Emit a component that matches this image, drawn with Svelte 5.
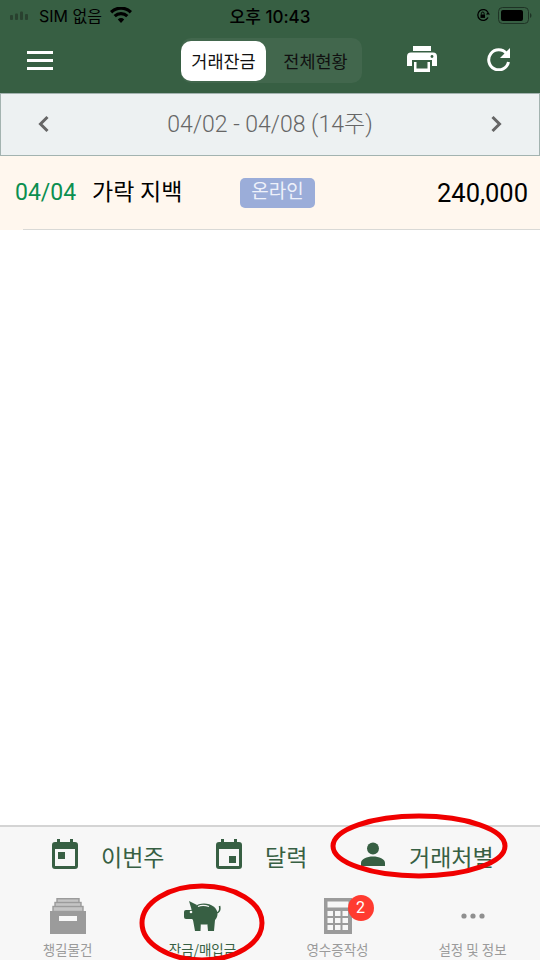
<script>
  const tabs = [
    { label: '챙길물건', icon: 'box' },
    { label: '잔금/매입금', icon: 'pig', active: true },
    { label: '영수증작성', icon: 'calc', badge: 2 },
    { label: '설정 및 정보', icon: 'dots' }
  ];
</script>

<div class="page">
  <header class="head">
    <div class="status">
      <div class="status-left">
        <svg class="signal" width="18" height="10" viewBox="0 0 18 10"><rect x="0" y="5" width="3" height="5" rx="1" fill="#29412f"/><rect x="5" y="3.5" width="3" height="6.5" rx="1" fill="#29412f"/><rect x="10" y="1.5" width="3" height="8.5" rx="1" fill="#29412f"/><rect x="15" y="4" width="3" height="6" rx="1" fill="#29412f"/></svg>
        <span class="sim">SIM 없음</span>
        <svg width="22" height="16" viewBox="0 0 22 16"><path d="M11 16l-3.2-3.6a4.6 4.6 0 0 1 6.4 0z M5.8 10.2L3.6 7.9a10.6 10.6 0 0 1 14.8 0l-2.2 2.3a7.6 7.6 0 0 0-10.4 0z M2.2 6.4L0 4a15.8 15.8 0 0 1 22 0l-2.2 2.4a12.6 12.6 0 0 0-17.6 0z" fill="#000"/></svg>
      </div>
      <span class="clock">오후 10:43</span>
      <div class="status-right">
        <svg width="14" height="14" viewBox="0 0 14 14"><path d="M12 9.500A5.400 5.400 0 1 1 12 4.500" fill="none" stroke="#000" stroke-width="1.300"/><path d="M10 6.500h4l-2-2.500z" fill="#000"/><rect x="4.500" y="6.500" width="4.500" height="3.400" fill="#000"/><path d="M5.400 6.500V5.400a1.300 1.300 0 0 1 2.700 0v1.100" fill="none" stroke="#000" stroke-width="1"/></svg>
        <svg width="34" height="17" viewBox="0 0 34 17"><rect x="0.5" y="0.5" width="30" height="16" rx="4" fill="none" stroke="#1e3325"/><rect x="3" y="3" width="22" height="11" rx="2" fill="#000"/><path d="M32 6v5a2.6 2.6 0 0 0 1.5-2.5A2.6 2.6 0 0 0 32 6z" fill="#1e3325"/></svg>
      </div>
    </div>
    <div class="toolbar">
      <div class="burger"><i></i><i></i><i></i></div>
      <div class="segment">
        <span class="seg on">거래잔금</span>
        <span class="seg">전체현황</span>
      </div>
      <svg class="print" width="30" height="26" viewBox="0 0 30 26"><path d="M6 0h18v5H6z M4 6.500h22a4 4 0 0 1 4 4V20h-5v-6H5v6H0v-9.500a4 4 0 0 1 4-4z M7 16h16v10H7z" fill="#fff"/><rect x="9.500" y="15.500" width="11" height="7" fill="#375f43"/><circle cx="25" cy="10.500" r="1.400" fill="#375f43"/></svg>
      <svg class="refresh" width="24" height="24" viewBox="0 0 24 24"><path d="M19.500 6.500A10 10 0 1 0 21.500 15" fill="none" stroke="#fff" stroke-width="3"/><path d="M23 1v10H13z" fill="#fff"/></svg>
    </div>
  </header>

  <div class="datebar">
    <svg class="chev" width="13" height="18" viewBox="0 0 13 18"><path d="M10.500 2L3.500 9l7 7" fill="none" stroke="#666" stroke-width="3"/></svg>
    <span class="range">04/02 - 04/08 (14주)</span>
    <svg class="chev" width="13" height="18" viewBox="0 0 13 18"><path d="M2.500 2l7 7-7 7" fill="none" stroke="#666" stroke-width="3"/></svg>
  </div>

  <div class="row">
    <span class="date">04/04</span>
    <span class="name">가락 지백</span>
    <span class="tag">온라인</span>
    <span class="amount">240,000</span>
  </div>

  <div class="spacer"></div>

  <div class="filters">
    <div class="filter f1">
      <svg width="26" height="30" viewBox="0 0 26 30"><path d="M3 3h20a3 3 0 0 1 3 3v21a3 3 0 0 1-3 3H3a3 3 0 0 1-3-3V6a3 3 0 0 1 3-3zM3 10v17h20V10z" fill="#375f43" fill-rule="evenodd"/><rect x="5" y="0" width="3" height="5" fill="#375f43"/><rect x="18" y="0" width="3" height="5" fill="#375f43"/><rect x="6" y="13" width="7" height="7" fill="#375f43"/></svg>
      <span>이번주</span>
    </div>
    <div class="filter f2">
      <svg width="26" height="30" viewBox="0 0 26 30"><path d="M3 3h20a3 3 0 0 1 3 3v21a3 3 0 0 1-3 3H3a3 3 0 0 1-3-3V6a3 3 0 0 1 3-3zM3 10v17h20V10z" fill="#375f43" fill-rule="evenodd"/><rect x="5" y="0" width="3" height="5" fill="#375f43"/><rect x="18" y="0" width="3" height="5" fill="#375f43"/><rect x="13" y="17" width="7" height="7" fill="#375f43"/></svg>
      <span>달력</span>
    </div>
    <div class="filter f3">
      <svg width="24" height="24" viewBox="0 0 24 24"><circle cx="12" cy="6.500" r="6" fill="#375f43"/><path d="M0 24v-3c0-4 6-6.500 12-6.500S24 17 24 21v3z" fill="#375f43"/></svg>
      <span>거래처별</span>
    </div>
  </div>

  <nav class="tabs">
    {#each tabs as t}
      <div class="tab" class:active={t.active}>
        <div class="ico">
          {#if t.icon === 'box'}
            <svg width="36" height="36" viewBox="0 0 36 36"><g fill="#c4c4c4" stroke="#9b9b9b" stroke-width="1.400"><rect x="7" y="0.700" width="22" height="5"/><rect x="5" y="4.500" width="26" height="5"/><rect x="3" y="8.500" width="30" height="5"/></g><path d="M0 13h36v23H0z" fill="#9b9b9b"/><rect x="9" y="18" width="18" height="5" fill="#f7f7f7"/></svg>
          {:else if t.icon === 'pig'}
            <svg width="37" height="30" viewBox="0 0 37 30"><ellipse cx="20" cy="13" rx="13.500" ry="10.500" fill="#375f43"/><path d="M5 0l8 4-5 6z" fill="#375f43"/><rect x="0" y="9" width="10" height="9" rx="2" fill="#375f43"/><path d="M9 19h8l-.5 11H11zM23 19h8l-1 11h-6z" fill="#375f43"/><path d="M32 12c3 0 4.500-3 3.500-7" fill="none" stroke="#375f43" stroke-width="1.600"/><path d="M14 5.500c3-1.400 7-1.400 11 0" fill="none" stroke="#f7f7f7" stroke-width="1.300"/><circle cx="7" cy="11" r="1.300" fill="#f7f7f7"/></svg>
          {:else if t.icon === 'calc'}
            <svg width="28" height="36" viewBox="0 0 28 36"><path d="M0 0h28v36H0z" fill="#9b9b9b"/><rect x="3.500" y="3.500" width="21" height="6" fill="#f7f7f7"/>{#each [13,20,27] as y}{#each [3.5,11,18.5] as x}<rect {x} {y} width="5.500" height="5" fill="#f7f7f7"/>{/each}{/each}</svg>
            <span class="badge">{t.badge}</span>
          {:else}
            <svg width="24" height="6" viewBox="0 0 24 6"><circle cx="3" cy="3" r="2.600" fill="#8f8f8f"/><circle cx="12" cy="3" r="2.600" fill="#8f8f8f"/><circle cx="21" cy="3" r="2.600" fill="#8f8f8f"/></svg>
          {/if}
        </div>
        <span class="tab-label">{t.label}</span>
      </div>
    {/each}
  </nav>

  <svg class="marks" width="540" height="960" viewBox="0 0 540 960">
    <ellipse cx="419" cy="846" rx="86" ry="30" fill="none" stroke="#f00000" stroke-width="5"/>
    <ellipse cx="202" cy="923" rx="60" ry="37" fill="none" stroke="#f00000" stroke-width="5"/>
  </svg>
</div>

<style>
  :global(body) { margin: 0; }
  .page {
    position: relative;
    width: 540px;
    height: 960px;
    overflow: hidden;
    display: flex;
    flex-direction: column;
    background: #fff;
    font-family: "Noto Sans CJK KR", "Noto Sans", sans-serif;
  }
  .head { height: 93px; background: #375f43; flex: none; }
  .status {
    height: 30px;
    display: flex;
    align-items: center;
    justify-content: space-between;
    padding: 0 8px 0 10px;
    position: relative;
    color: #000;
    font-family: "Inter", "Noto Sans CJK KR", sans-serif;
  }
  .status-left { display: flex; align-items: center; font-size: 16px; width: 150px; }
  .signal { margin-right: 11px; }
  .sim { margin-right: 8px; }
  .clock {
    position: absolute;
    left: 0; right: 0;
    text-align: center;
    font-size: 17px;
    font-weight: 500;
  }
  .status-right { display: flex; align-items: center; gap: 8px; }
  .toolbar {
    height: 63px;
    display: flex;
    align-items: flex-start;
    position: relative;
  }
  .burger {
    margin: 21px 0 0 27px;
    width: 26px;
    display: flex;
    flex-direction: column;
    gap: 5px;
  }
  .burger i { display: block; height: 3px; background: #fff; }
  .segment {
    margin: 8px 0 0 128px;
    width: 181px;
    height: 45px;
    background: #42674d;
    border-radius: 10px;
    display: flex;
    align-items: center;
  }
  .seg {
    width: 85px;
    height: 40px;
    line-height: 39px;
    text-align: center;
    font-size: 17.500px;
    color: #111;
    border-radius: 10px;
  }
  .seg:not(.on) { margin-left: 7px; }
  .seg.on { background: #fff; }
  .print { margin: 16px 0 0 45px; }
  .refresh { margin: 17px 0 0 50px; }
  .datebar {
    box-sizing: border-box;
    flex: none;
    height: 63px;
    background: #edf1f2;
    border: 1px solid #a3b3b0;
    display: flex;
    align-items: center;
    justify-content: space-between;
    padding: 0 36px;
  }
  .chev { margin-bottom: 2px; }
  .range {
    font-family: "Roboto", "Noto Sans CJK KR", sans-serif;
    font-weight: 300;
    font-size: 23px;
    color: #666;
    margin-bottom: 5px;
  }
  .row {
    flex: none;
    position: relative;
    height: 74px;
    background: #fff7ee;
    display: flex;
    align-items: center;
    padding: 0 12px 0 15px;
    font-family: "Roboto", "Noto Sans CJK KR", sans-serif;
    box-sizing: border-box;
  }
  .row::after {
    content: "";
    position: absolute;
    left: 23px; right: 0; bottom: 0;
    height: 1px;
    background: #d9d9d6;
  }
  .date { color: #0b8f50; font-size: 23px; width: 77px; margin-bottom: 2px; }
  .name { color: #000; font-size: 23px; width: 148px; margin-bottom: 6px; }
  .tag {
    width: 75px;
    height: 30px;
    line-height: 28px;
    text-align: center;
    background: #9badd9;
    color: #eef1fa;
    border-radius: 5px;
    font-size: 19px;
  }
  .amount { margin-left: auto; font-size: 25.500px; color: #000; }
  .spacer { flex: 1; }
  .filters {
    flex: none;
    height: 56px;
    box-sizing: border-box;
    border-top: 2px solid #d4d4d4;
    background: #f7f7f7;
    position: relative;
    display: flex;
    align-items: center;
  }
  .filter { display: flex; align-items: center; color: #375f43; font-size: 23px; font-weight: 400; }
  .filter span { padding-top: 4px; }
  .f1 { margin-left: 52px; gap: 23px; width: 164px; }
  .f2 { gap: 23px; width: 145px; }
  .f3 { gap: 24px; }
  .tabs {
    flex: none;
    height: 79px;
    background: #f7f7f7;
    display: grid;
    grid-template-columns: 135px 135px 135px 135px;
  }
  .tab { display: flex; flex-direction: column; align-items: center; }
  .ico {
    position: relative;
    height: 48px;
    margin-top: 11px;
    display: flex;
    align-items: center;
    justify-content: center;
  }
  .badge {
    position: absolute;
    left: 11px;
    top: 3px;
    margin-left: 13px;
    width: 26px;
    height: 26px;
    line-height: 26px;
    text-align: center;
    border-radius: 50%;
    background: #ff3b30;
    color: #fff;
    font-size: 16px;
    font-family: "Roboto", sans-serif;
  }
  .tab-label { font-size: 13.500px; color: #9b9b9b; line-height: 20px; margin-top: -1px; }
  .tab.active .tab-label { color: #375f43; }
  .marks { position: absolute; left: 0; top: 0; pointer-events: none; }
</style>
